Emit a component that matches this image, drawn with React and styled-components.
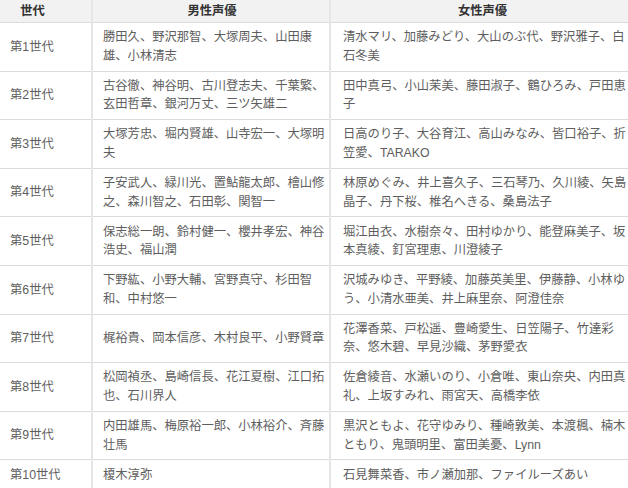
import React from 'react';
import styled, { createGlobalStyle } from 'styled-components';

const rows = [
  {
    gen: '第1世代',
    male: ['勝田久、野沢那智、大塚周夫、山田康', '雄、小林清志'],
    female: ['清水マリ、加藤みどり、大山のぶ代、野沢雅子、白', '石冬美'],
  },
  {
    gen: '第2世代',
    male: ['古谷徹、神谷明、古川登志夫、千葉繁、', '玄田哲章、銀河万丈、三ツ矢雄二'],
    female: ['田中真弓、小山茉美、藤田淑子、鶴ひろみ、戸田恵', '子'],
  },
  {
    gen: '第3世代',
    male: ['大塚芳忠、堀内賢雄、山寺宏一、大塚明', '夫'],
    female: ['日高のり子、大谷育江、高山みなみ、皆口裕子、折', '笠愛、TARAKO'],
  },
  {
    gen: '第4世代',
    male: ['子安武人、緑川光、置鮎龍太郎、檜山修', '之、森川智之、石田彰、関智一'],
    female: ['林原めぐみ、井上喜久子、三石琴乃、久川綾、矢島', '晶子、丹下桜、椎名へきる、桑島法子'],
  },
  {
    gen: '第5世代',
    male: ['保志総一朗、鈴村健一、櫻井孝宏、神谷', '浩史、福山潤'],
    female: ['堀江由衣、水樹奈々、田村ゆかり、能登麻美子、坂', '本真綾、釘宮理恵、川澄綾子'],
  },
  {
    gen: '第6世代',
    male: ['下野紘、小野大輔、宮野真守、杉田智', '和、中村悠一'],
    female: ['沢城みゆき、平野綾、加藤英美里、伊藤静、小林ゆ', 'う、小清水亜美、井上麻里奈、阿澄佳奈'],
  },
  {
    gen: '第7世代',
    male: ['梶裕貴、岡本信彦、木村良平、小野賢章'],
    female: ['花澤香菜、戸松遥、豊崎愛生、日笠陽子、竹達彩', '奈、悠木碧、早見沙織、茅野愛衣'],
  },
  {
    gen: '第8世代',
    male: ['松岡禎丞、島崎信長、花江夏樹、江口拓', '也、石川界人'],
    female: ['佐倉綾音、水瀬いのり、小倉唯、東山奈央、内田真', '礼、上坂すみれ、雨宮天、高橋李依'],
  },
  {
    gen: '第9世代',
    male: ['内田雄馬、梅原裕一郎、小林裕介、斉藤', '壮馬'],
    female: ['黒沢ともよ、花守ゆみり、種崎敦美、本渡楓、楠木', 'ともり、鬼頭明里、富田美憂、Lynn'],
  },
  {
    gen: '第10世代',
    male: ['榎木淳弥'],
    female: ['石見舞菜香、市ノ瀬加那、ファイルーズあい'],
  },
];

const Lines = ({ lines }) =>
  lines.map((line, i) => (
    <React.Fragment key={i}>
      {i > 0 && <br />}
      {line}
    </React.Fragment>
  ));

const App = () => {
  return (
    <>
      <GlobalStyle />
      <Table>
        <colgroup>
          <col style={{ width: 92 }} />
          <col style={{ width: 238 }} />
          <col style={{ width: 298 }} />
        </colgroup>
        <thead>
          <tr>
            <HeadCell $pr={26}>世代</HeadCell>
            <HeadCell $pl={2}>男性声優</HeadCell>
            <HeadCell $pl={6}>女性声優</HeadCell>
          </tr>
        </thead>
        <tbody>
          {rows.map((row) => (
            <Row key={row.gen}>
              <GenCell>{row.gen}</GenCell>
              <NameCell>
                <Lines lines={row.male} />
              </NameCell>
              <NameCell $pl={12}>
                <Lines lines={row.female} />
              </NameCell>
            </Row>
          ))}
        </tbody>
      </Table>
    </>
  );
};

export default App;

const GlobalStyle = createGlobalStyle`
  html, body {
    margin: 0;
    padding: 0;
    background: #fff;
  }
  body {
    font-family: "Liberation Sans", "Noto Sans CJK JP", sans-serif;
    overflow: hidden;
  }
`;

const Table = styled.table`
  width: 628px;
  table-layout: fixed;
  border-collapse: collapse;
  font-size: 12.3px;
  color: #5e5e5e;
`;

const HeadCell = styled.th`
  height: 22px;
  padding: 0 ${(p) => p.$pr || 0}px 0 ${(p) => p.$pl || 0}px;
  background: #f2f2f2;
  color: #333;
  font-weight: 700;
  text-align: center;
  line-height: 22px;
  border-bottom: 1px solid #dcdcdc;
  border-left: 2px solid #e6e6e6;

  &:first-child {
    border-left: none;
  }
`;

const Row = styled.tr`
  border-bottom: 1px solid #dcdcdc;
`;

const Cell = styled.td`
  padding: 5.3px 10px 5.3px ${(p) => p.$pl || 10}px;
  line-height: 18.5px;
  vertical-align: middle;
  white-space: nowrap;
  border-left: 2px solid #e6e6e6;
`;

const GenCell = styled(Cell)`
  border-left: none;
`;

const NameCell = styled(Cell)`
  overflow: visible;
`;
